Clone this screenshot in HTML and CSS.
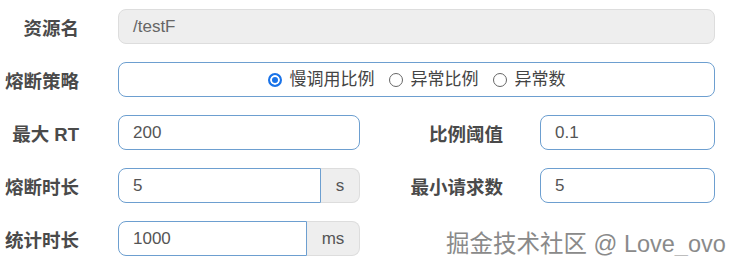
FILE: index.html
```html
<!DOCTYPE html>
<html>
<head>
    <title>熔断规则</title>
    <link rel="stylesheet" href="styles.css">
</head>
<body>
    <form class="rule-form">
        <div class="row">
            <label class="label">资源名</label>
            <div class="field wide disabled">/testF</div>
        </div>
        <div class="row">
            <label class="label">熔断策略</label>
            <div class="field wide radios">
                <span class="radio checked"><i></i>慢调用比例</span>
                <span class="radio"><i></i>异常比例</span>
                <span class="radio"><i></i>异常数</span>
            </div>
        </div>
        <div class="row">
            <label class="label">最大 RT</label>
            <div class="field half">200</div>
            <label class="label right">比例阈值</label>
            <div class="field small">0.1</div>
        </div>
        <div class="row">
            <label class="label">熔断时长</label>
            <div class="group half">
                <div class="field">5</div>
                <span class="addon">s</span>
            </div>
            <label class="label right">最小请求数</label>
            <div class="field small">5</div>
        </div>
        <div class="row">
            <label class="label">统计时长</label>
            <div class="group half">
                <div class="field">1000</div>
                <span class="addon ms">ms</span>
            </div>
            <span class="watermark">掘金技术社区 @ Love_ovo</span>
        </div>
    </form>
</body>
</html>
```

FILE: styles.css
```css
html,
body {
    margin: 0;
    padding: 0;
    background: #fff;
    font-family: "Liberation Sans", "Noto Sans CJK SC", sans-serif;
    color: #555;
}
.rule-form {
    padding-top: 9px;
    display: flex;
    flex-direction: column;
    gap: 18px;
}
.row {
    display: flex;
    align-items: center;
    height: 35px;
}
.label {
    flex: none;
    width: 79px;
    margin-right: 39px;
    text-align: right;
    font-size: 18.5px;
    font-weight: bold;
    color: #4a4a4a;
    white-space: nowrap;
}
.label.right {
    width: 143px;
    margin-right: 37px;
}
.field {
    box-sizing: border-box;
    height: 35px;
    line-height: 33px;
    padding: 0 14px;
    font-size: 17px;
    border: 1px solid #6d9fd0;
    border-radius: 8px;
    background: #fff;
}
.field.wide {
    width: 597px;
}
.half {
    flex: none;
    width: 242px;
}
.field.small {
    width: 175px;
}
.field.disabled {
    background: #eee;
    border-color: #ddd;
    color: #666;
}
.radios {
    display: flex;
    justify-content: center;
    gap: 14px;
    font-size: 17px;
    color: #444;
}
.radio {
    display: flex;
    align-items: center;
    gap: 8px;
}
.radio i {
    box-sizing: border-box;
    width: 14px;
    height: 14px;
    border: 1px solid #666;
    border-radius: 50%;
}
.radio.checked i {
    border: 2px solid #1a73e8;
    background: #1a73e8;
    box-shadow: inset 0 0 0 2px #fff;
}
.group {
    display: flex;
    height: 35px;
}
.group .field {
    flex: 1;
    border-radius: 8px 0 0 8px;
}
.addon {
    flex: none;
    box-sizing: border-box;
    width: 39px;
    height: 35px;
    line-height: 33px;
    text-align: center;
    font-size: 17px;
    background: #eee;
    border: 1px solid #ddd;
    border-left: 0;
    border-radius: 0 8px 8px 0;
}
.addon.ms {
    width: 53px;
}
.watermark {
    margin-left: 86px;
    margin-top: 6px;
    font-size: 23.5px;
    color: #8a8a8a;
    text-shadow: 0 0 2px #fff, 1px 1px 1px #fff;
    white-space: nowrap;
}
```
